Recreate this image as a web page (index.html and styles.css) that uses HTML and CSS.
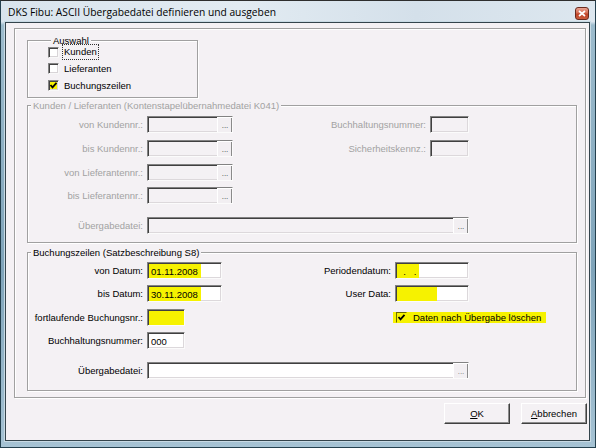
FILE: index.html
```html
<!DOCTYPE html>
<html lang="de">
<head>
<meta charset="utf-8">
<title>DKS Fibu</title>
<link rel="stylesheet" href="styles.css">
</head>
<body>
<div class="window">
  <div class="titlebar">
    <span class="title">DKS Fibu: ASCII Übergabedatei definieren und ausgeben</span>
    <span class="close"><svg width="8" height="7" viewBox="0 0 8 7"><path d="M1 1 L7 6 M7 1 L1 6" stroke="#fff" stroke-width="1.7" fill="none"/></svg></span>
  </div>
  <div class="client">
    <div class="outer">
      <fieldset class="group auswahl">
        <legend>Auswahl</legend>
        <div class="check first"><span class="box"></span><span class="focus">Kunden</span></div>
        <div class="check"><span class="box"></span><span>Lieferanten</span></div>
        <div class="check"><span class="box hl"><svg width="9" height="9" viewBox="0 0 9 9"><path d="M1.5 4 L3.5 6.3 L7.5 1.8" stroke="#000" stroke-width="1.8" fill="none"/></svg></span><span>Buchungszeilen</span></div>
      </fieldset>

      <fieldset class="group kl disabled">
        <legend>Kunden / Lieferanten (Kontenstapelübernahmedatei K041)</legend>
        <div class="r">
          <span class="lbl">von Kundennr.:</span>
          <span class="field"><span class="dots">...</span></span>
          <span class="lbl">Buchhaltungsnummer:</span>
          <span class="field"></span>
        </div>
        <div class="r">
          <span class="lbl">bis Kundennr.:</span>
          <span class="field"><span class="dots">...</span></span>
          <span class="lbl">Sicherheitskennz.:</span>
          <span class="field"></span>
        </div>
        <div class="r">
          <span class="lbl">von Lieferantennr.:</span>
          <span class="field"><span class="dots">...</span></span>
        </div>
        <div class="r r4">
          <span class="lbl">bis Lieferantennr.:</span>
          <span class="field"><span class="dots">...</span></span>
        </div>
        <div class="r r5">
          <span class="lbl">Übergabedatei:</span>
          <span class="field wide"><span class="dots">...</span></span>
        </div>
      </fieldset>

      <fieldset class="group bz">
        <legend>Buchungszeilen (Satzbeschreibung S8)</legend>
        <div class="r">
          <span class="lbl">von Datum:</span>
          <span class="field"><span class="val yl">01.11.2008</span></span>
          <span class="lbl">Periodendatum:</span>
          <span class="field"><span class="val yl w22">&nbsp;&nbsp;.&nbsp;&nbsp;&nbsp;.</span></span>
        </div>
        <div class="r r2">
          <span class="lbl">bis Datum:</span>
          <span class="field"><span class="val yl">30.11.2008</span></span>
          <span class="lbl">User Data:</span>
          <span class="field"><span class="val yl w40"></span></span>
        </div>
        <div class="r r3">
          <span class="lbl">fortlaufende Buchungsnr.:</span>
          <span class="field w38"><span class="val yl full"></span></span>
          <span></span>
          <div class="check hlrow"><span class="box hl"><svg width="9" height="9" viewBox="0 0 9 9"><path d="M1.5 4 L3.5 6.3 L7.5 1.8" stroke="#000" stroke-width="1.8" fill="none"/></svg></span><span>Daten nach Übergabe löschen</span></div>
        </div>
        <div class="r r4">
          <span class="lbl">Buchhaltungsnummer:</span>
          <span class="field w38"><span class="val">000</span></span>
        </div>
        <div class="r r5">
          <span class="lbl">Übergabedatei:</span>
          <span class="field wide"><span class="dots">...</span></span>
        </div>
      </fieldset>
    </div>
    <div class="buttons">
      <button class="btn"><u>O</u>K</button>
      <button class="btn"><u>A</u>bbrechen</button>
    </div>
  </div>
</div>
</body>
</html>
```
FILE: styles.css
```css
* { box-sizing: border-box; }
html, body { margin: 0; padding: 0; }
body {
  width: 596px;
  height: 448px;
  overflow: hidden;
  background: #6e93aa;
  font-family: "Liberation Sans", Arial, sans-serif;
  font-size: 9.5px;
  color: #000;
}
.window {
  width: 596px;
  height: 448px;
  display: flex;
  flex-direction: column;
  background: linear-gradient(to bottom, #dbe6ee 0, #d5e1ea 21px, #9dbccd 24px, #7fa4ba 60%, #a6c3d4 100%);
  border: 1px solid #24404e;
  border-top-color: #2e2e2e;
}
.titlebar {
  height: 21px;
  flex: none;
  display: flex;
  align-items: center;
  padding: 0 6px 0 7px;
  background: linear-gradient(to right, #d9e4ed 0%, #e2ebf2 40%, #d4e0ea 70%, #dde7ef 100%);
}
.title {
  font-family: "Open Sans", "Noto Sans", sans-serif;
  font-size: 10.25px;
  color: #000;
  white-space: nowrap;
}
.close {
  margin-left: auto;
  align-self: flex-start;
  margin-top: 6px;
  width: 14px;
  height: 13px;
  border: 1px solid #6a2b1e;
  border-radius: 3px;
  background: linear-gradient(to bottom, #e9a493 0%, #d46a50 45%, #bf4427 55%, #c95a3b 100%);
  display: flex;
  align-items: center;
  justify-content: center;
}
.client {
  flex: 1;
  margin: 0 5px 6px 4px;
  border: 1px solid #34444c;
  box-shadow: 0 0 0 1px #c8dae4;
  background: #f4f1f4;
  display: flex;
  flex-direction: column;
}
.outer {
  margin: 5px 3px 0 8px;
  border: 1px solid #a0a0a0;
  box-shadow: inset 1px 1px 0 #fff, 1px 1px 0 #fff;
  padding: 0 8px 6px 12px;
}
.group {
  margin: 0;
  padding: 0;
  min-width: 0;
  border: 1px solid #a0a0a0;
  box-shadow: inset 1px 1px 0 #fff, 1px 1px 0 #fff;
}
.group legend {
  padding: 0 2px;
  margin-left: 3px;
  line-height: 9px;
  background: #f4f1f4;
}
.auswahl {
  width: 171px;
  margin-top: 7px;
  padding: 0 0 3.5px 20px;
}
.check {
  display: flex;
  align-items: center;
  height: 16.5px;
  gap: 5px;
  white-space: nowrap;
}
.check.first { margin-top: -1px; }
.box {
  width: 11px;
  height: 11px;
  flex: none;
  border: 1px solid;
  border-color: #858585 #f8f8f8 #f8f8f8 #858585;
  box-shadow: inset 1px 1px 0 #434343, inset -1px -1px 0 #d8d4d7;
  background: #fff;
  display: flex;
  align-items: center;
  justify-content: center;
}
.box.hl { background: #f6f200; }
.focus {
  margin-left: -1px;
  padding: 1px 1px;
  outline: 1px dotted #333;
  line-height: 12px;
}
.kl {
  width: 550px;
  margin-top: 3px;
  padding: 6px 0 8px 0;
}
.disabled { color: #a2a2a2; }
.disabled legend { color: #a2a2a2; }
.r {
  display: grid;
  grid-template-columns: 115px 86px 189px 39px;
  column-gap: 4px;
  height: 17px;
}
.r + .r { margin-top: 7px; }
.r.r4 { margin-top: 6px; }
.r.r5 { margin-top: 13px; }
.bz .r { grid-template-columns: 115px 75px 165px 74px; }
.bz .r.r2 { margin-top: 6px; }
.bz .r.r3 { margin-top: 7px; }
.bz .r.r4 { margin-top: 6px; }
.bz .r.r5 { margin-top: 13px; }
.bz {
  width: 550px;
  margin-top: 5px;
  padding: 5px 0 11px 0;
}
.lbl {
  text-align: right;
  align-self: center;
  white-space: nowrap;
}
.field {
  height: 17px;
  border: 1px solid;
  border-color: #828282 #fbfbfb #fbfbfb #828282;
  box-shadow: inset 1px 1px 0 #404040, inset -1px -1px 0 #dcd8db;
  background: #fff;
  display: flex;
  align-items: stretch;
  overflow: hidden;
  padding: 1px 0 0 1px;
}
.disabled .field { background: #f4f1f4; }
.field.wide { grid-column: 2 / 5; }
.field.w38 { width: 38px; }
.val {
  display: flex;
  align-items: center;
  padding: 0 2px 0 2px;
  white-space: nowrap;
  color: #000;
}
.val.yl { background: #f6f200; padding-right: 3px; }
.val.w22 { width: 22px; padding-left: 1px; }
.val.w40 { width: 40px; }
.val.full { flex: 1; }
.dots {
  margin-left: auto;
  margin-top: -1px;
  width: 16px;
  height: 17px;
  margin-right: -1px;
  border: 1px solid;
  border-color: #fff #404040 #404040 #fff;
  box-shadow: inset -1px -1px 0 #8a8a8a;
  background: #f2eff2;
  color: #3a3a3a;
  font-size: 8px;
  line-height: 8px;
  display: flex;
  align-items: flex-end;
  justify-content: center;
  padding-bottom: 3px;
}
.bz .dots { color: #777; }
.hlrow {
  margin-left: -2px;
  height: 11px;
  width: 153px;
  align-self: center;
  background: #f6f200;
  padding-left: 3px;
  gap: 6px;
}
.hlrow .box { border-color: #6a6a00 #f6f200 #f6f200 #6a6a00; box-shadow: none; }
.buttons {
  display: flex;
  justify-content: flex-end;
  gap: 11px;
  margin: 5px 2px 0 0;
}
.btn {
  width: 66px;
  height: 21px;
  margin: 0;
  padding: 0;
  border: 1px solid;
  border-color: #fff #404040 #404040 #fff;
  box-shadow: inset -1px -1px 0 #8c8c8c;
  background: #f4f1f4;
  font-family: "Liberation Sans", Arial, sans-serif;
  font-size: 9.5px;
  color: #000;
}
.btn u { text-underline-offset: 1px; }
```
